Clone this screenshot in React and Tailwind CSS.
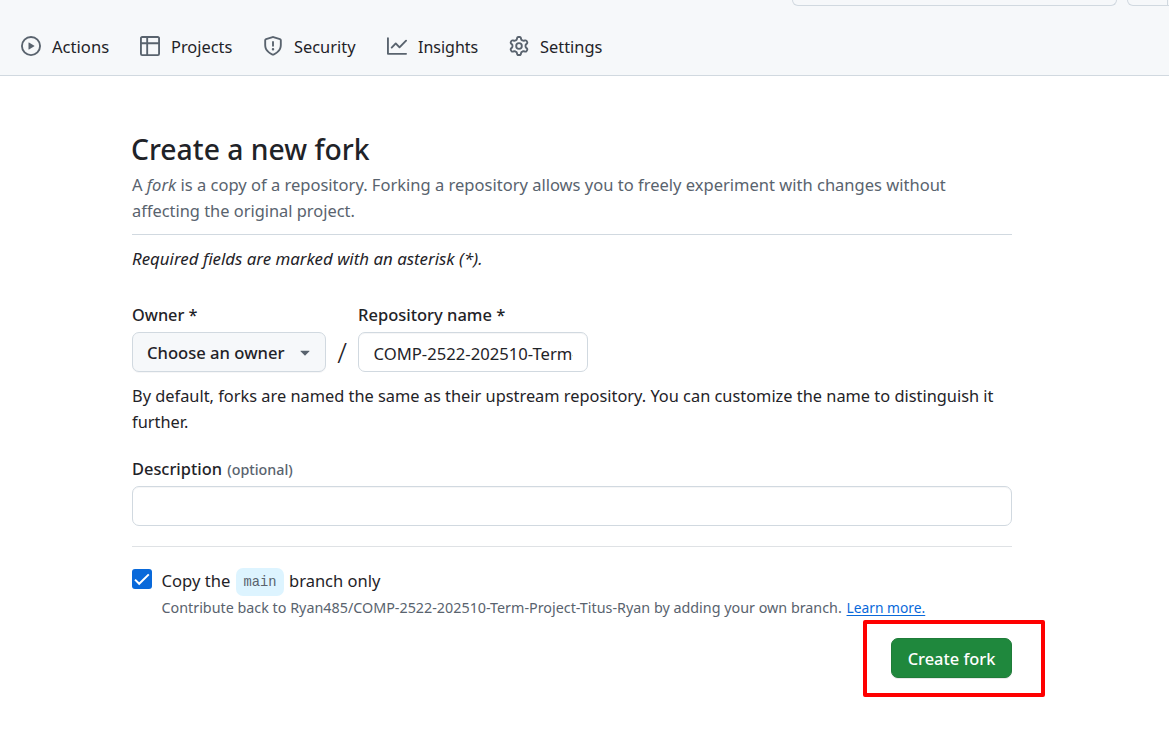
import React from "react";

const ICONS = {
  play: "M8 0a8 8 0 1 1 0 16A8 8 0 0 1 8 0ZM1.5 8a6.5 6.5 0 1 0 13 0 6.5 6.5 0 0 0-13 0Zm4.879-2.773 4.264 2.559a.25.25 0 0 1 0 .428l-4.264 2.559A.25.25 0 0 1 6 10.559V5.442a.25.25 0 0 1 .379-.215Z",
  table: "M0 1.75C0 .784.784 0 1.75 0h12.5C15.216 0 16 .784 16 1.75v12.5A1.75 1.75 0 0 1 14.25 16H1.75A1.75 1.75 0 0 1 0 14.25ZM6.5 6.5v8h7.75a.25.25 0 0 0 .25-.25V6.5Zm8-1.5V1.75a.25.25 0 0 0-.25-.25H6.5V5Zm-13 1.5v7.75c0 .138.112.25.25.25H5v-8ZM5 5V1.5H1.75a.25.25 0 0 0-.25.25V5Z",
  shield: "M7.467.133a1.748 1.748 0 0 1 1.066 0l5.25 1.68A1.75 1.75 0 0 1 15 3.48V7c0 1.566-.32 3.182-1.303 4.682-.983 1.498-2.585 2.813-5.032 3.855a1.697 1.697 0 0 1-1.33 0c-2.447-1.042-4.049-2.357-5.032-3.855C1.32 10.182 1 8.566 1 7V3.48a1.75 1.75 0 0 1 1.217-1.667Zm.61 1.429a.25.25 0 0 0-.153 0l-5.25 1.68a.25.25 0 0 0-.174.238V7c0 1.358.275 2.666 1.057 3.86.784 1.194 2.121 2.34 4.366 3.297a.196.196 0 0 0 .154 0c2.245-.956 3.582-2.104 4.366-3.298C13.225 9.666 13.5 8.36 13.5 7V3.48a.251.251 0 0 0-.174-.237l-5.25-1.68ZM8.75 4.75v3a.75.75 0 0 1-1.5 0v-3a.75.75 0 0 1 1.5 0ZM9 10.5a1 1 0 1 1-2 0 1 1 0 0 1 2 0Z",
  graph: "M1.5 1.75V13.5h13.75a.75.75 0 0 1 0 1.5H.75a.75.75 0 0 1-.75-.75V1.75a.75.75 0 0 1 1.5 0Zm14.28 2.53-5.25 5.25a.75.75 0 0 1-1.06 0L7 7.06 4.28 9.78a.751.751 0 0 1-1.042-.018.751.751 0 0 1-.018-1.042l3.25-3.25a.75.75 0 0 1 1.06 0L10 7.94l4.72-4.72a.751.751 0 0 1 1.042.018.751.751 0 0 1 .018 1.042Z",
  gear: "M8 0a8.2 8.2 0 0 1 .701.031C9.444.095 9.99.645 10.16 1.29l.288 1.107c.018.066.079.158.212.224.231.114.454.243.668.386.123.082.233.09.299.071l1.103-.303c.644-.176 1.392.021 1.82.63.27.385.506.792.704 1.218.315.675.111 1.422-.364 1.891l-.814.806c-.049.048-.098.147-.088.294.016.257.016.515 0 .772-.01.147.038.246.088.294l.814.806c.475.469.679 1.216.364 1.891a7.977 7.977 0 0 1-.704 1.217c-.428.61-1.176.807-1.82.63l-1.102-.302c-.067-.019-.177-.011-.3.071a5.909 5.909 0 0 1-.668.386c-.133.066-.194.158-.211.224l-.29 1.106c-.168.646-.715 1.196-1.458 1.26a8.006 8.006 0 0 1-1.402 0c-.743-.064-1.289-.614-1.458-1.26l-.289-1.106c-.018-.066-.079-.158-.212-.224a5.738 5.738 0 0 1-.668-.386c-.123-.082-.233-.09-.299-.071l-1.103.303c-.644.176-1.392-.021-1.82-.63a8.12 8.12 0 0 1-.704-1.218c-.315-.675-.111-1.422.363-1.891l.815-.806c.05-.048.098-.147.088-.294a6.214 6.214 0 0 1 0-.772c.01-.147-.038-.246-.088-.294l-.815-.806C.635 6.045.431 5.298.746 4.623a7.92 7.92 0 0 1 .704-1.217c.428-.61 1.176-.807 1.82-.63l1.102.302c.067.019.177.011.3-.071.214-.143.437-.272.668-.386.133-.066.194-.158.211-.224l.29-1.106C6.009.645 6.556.095 7.299.03 7.53.01 7.764 0 8 0Zm-.571 1.525c-.036.003-.108.036-.137.146l-.289 1.105c-.147.561-.549.967-.998 1.189-.173.086-.34.183-.5.29-.417.278-.97.423-1.529.27l-1.103-.303c-.109-.03-.175.016-.195.045-.22.312-.412.644-.573.99-.014.031-.021.11.059.19l.815.806c.411.406.562.957.53 1.456a4.709 4.709 0 0 0 0 .582c.032.499-.119 1.05-.53 1.456l-.815.806c-.081.08-.073.159-.059.19.162.346.353.677.573.989.02.03.085.076.195.046l1.102-.303c.56-.153 1.113-.008 1.53.27.161.107.328.204.501.29.447.222.85.629.997 1.189l.289 1.105c.029.109.101.143.137.146a6.6 6.6 0 0 0 1.142 0c.036-.003.108-.036.137-.146l.289-1.105c.147-.561.549-.967.998-1.189.173-.086.34-.183.5-.29.417-.278.97-.423 1.529-.27l1.103.303c.109.029.175-.016.195-.045.22-.313.411-.644.573-.99.014-.031.021-.11-.059-.19l-.815-.806c-.411-.406-.562-.957-.53-1.456a4.709 4.709 0 0 0 0-.582c-.032-.499.119-1.05.53-1.456l.815-.806c.081-.08.073-.159.059-.19a6.464 6.464 0 0 0-.573-.989c-.02-.03-.085-.076-.195-.046l-1.102.303c-.56.153-1.113.008-1.53-.27a4.44 4.44 0 0 0-.501-.29c-.447-.222-.85-.629-.997-1.189l-.289-1.105c-.029-.11-.101-.143-.137-.146a6.6 6.6 0 0 0-1.142 0ZM11 8a3 3 0 1 1-6 0 3 3 0 0 1 6 0ZM9.5 8a1.5 1.5 0 1 0-3.001.001A1.5 1.5 0 0 0 9.5 8Z",
  caret: "m4.427 7.427 3.396 3.396a.25.25 0 0 0 .354 0l3.396-3.396A.25.25 0 0 0 11.396 7H4.604a.25.25 0 0 0-.177.427Z",
};

function Icon({ name }) {
  return (
    <svg viewBox="0 0 16 16" className="size-5 shrink-0 fill-[#59636e]" aria-hidden="true">
      <path d={ICONS[name]} />
    </svg>
  );
}

const TABS = [
  { label: "Actions", icon: "play", style: "w-[119px] text-[16.6px]" },
  { label: "Projects", icon: "table", style: "w-[123px] text-[16.4px]" },
  { label: "Security", icon: "shield", style: "w-[124px] text-[16.4px]" },
  { label: "Insights", icon: "graph", style: "w-[122px] text-[16px]" },
  { label: "Settings", icon: "gear", style: "text-[16.4px]" },
];

function Header() {
  return (
    <header className="flex h-[76px] flex-col border-b border-[#d1d9e0] bg-[#f6f8fa]">
      <div className="flex h-1.5 shrink-0 gap-2.5 pl-[792px]">
        <div className="w-[325px] shrink-0 rounded-b-[7px] border border-t-0 border-[#d1d9e0]" />
        <div className="flex w-[60px] shrink-0 rounded-b-[7px] border border-t-0 border-[#d1d9e0]">
          <div className="w-10 border-r border-[#d1d9e0]" />
        </div>
      </div>
      <nav className="flex flex-1 items-center pt-[11px] pl-[21px]">
        {TABS.map((tab) => (
          <a key={tab.label} className={"flex items-center gap-[11px] leading-[26px] " + tab.style}>
            <Icon name={tab.icon} />
            <span className="pt-px">{tab.label}</span>
          </a>
        ))}
      </nav>
    </header>
  );
}

export default function App() {
  return (
    <div className="h-[748px] w-[1169px] overflow-hidden bg-white font-['Noto_Sans',sans-serif] text-[#1f2328]">
      <Header />
      <main className="ml-[132px] w-[880px] pt-[54px]">
        <h1 className="-ml-px text-[28.3px] leading-[38px] font-medium">Create a new fork</h1>
        <p className="mt-1 text-[16.52px] leading-[26px] whitespace-nowrap text-[#59636e]">
          A <em>fork</em> is a copy of a repository. Forking a repository allows you to freely experiment with changes without
          <br />
          <span className="text-[16.4px]">affecting the original project.</span>
        </p>
        <hr className="mt-[10px] border-[#d1d9e0]" />
        <p className="mt-[11px] text-[16.87px] leading-[26px] italic">Required fields are marked with an asterisk (*).</p>

        <div className="mt-[30px] flex items-end">
          <div className="flex w-[194px] flex-col gap-1">
            <label className="text-[16.3px] leading-[26px] font-medium">Owner *</label>
            <button className="flex h-10 items-center justify-between rounded-[7px] border border-[#d1d9e0] bg-[#f6f8fa] pr-[10px] pl-[14px] text-[16.6px] font-medium shadow-[0_1px_0_rgba(31,35,40,0.04)]">
              <span className="pt-0.5">Choose an owner</span>
              <Icon name="caret" />
            </button>
          </div>
          <span className="flex h-10 w-8 items-center justify-center text-[28px] font-light">/</span>
          <div className="flex w-[230px] flex-col gap-1">
            <label className="text-[16.5px] leading-[26px] font-medium">Repository name *</label>
            <input
              readOnly
              value="COMP-2522-202510-Term-Project-Titus-Ryan"
              className="h-10 w-full rounded-[7px] border border-[#d1d9e0] px-[14.5px] pt-0.5 text-[16.65px] shadow-[inset_0_1px_0_rgba(31,35,40,0.04)]"
            />
          </div>
        </div>

        <p className="mt-[11px] text-[16.36px] leading-[26px] whitespace-nowrap">
          By default, forks are named the same as their upstream repository. You can customize the name to distinguish it
          <br />
          further.
        </p>

        <div className="mt-[21px] flex flex-col gap-[3px]">
          <label className="text-[16.4px] leading-[26px] font-medium">
            Description <span className="ml-px text-[14.3px] text-[#59636e]">(optional)</span>
          </label>
          <div className="h-10 rounded-[7px] border border-[#d1d9e0] shadow-[inset_0_1px_0_rgba(31,35,40,0.04)]" />
        </div>
        <hr className="mt-5 border-[#dfe2e5]" />

        <div className="mt-[21px] flex gap-[9.5px]">
          <div className="mt-px flex size-5 shrink-0 items-center justify-center rounded-[3px] bg-[#0969da]">
            <svg viewBox="0 0 20 20" className="size-5" aria-hidden="true">
              <path d="M3 10.6 7.2 14.8 16.8 5.4" className="fill-none stroke-white stroke-2" />
            </svg>
          </div>
          <div>
            <div className="flex h-7 items-center text-[16.6px]">
              <span className="w-[74.5px] pb-0.5">Copy the</span>
              <span className="flex h-7 w-12 items-center justify-center rounded-[7px] bg-[#ddf4ff] pt-0.5 font-['Liberation_Mono',monospace] text-[13.75px] text-[#59636e]">
                main
              </span>
              <span className="ml-[5px] pb-0.5 text-[16.5px]">branch only</span>
            </div>
            <p className="text-[14.33px] leading-[24px] whitespace-nowrap text-[#59636e]">
              Contribute back to Ryan485/COMP-2522-202510-Term-Project-Titus-Ryan by adding your own branch.{" "}
              <a className="ml-px text-[13.8px] text-[#0969da] underline underline-offset-2">Learn more.</a>
            </p>
          </div>
        </div>

        <div className="-mr-[33px] ml-auto h-[77px] w-[182px] rounded-[2px] border-4 border-[#fe0000] pt-[14px] pl-6">
          <button className="h-10 w-[121px] rounded-[7px] border border-[#1f7c39] bg-[#1f883d] pt-0.5 text-[16.4px] font-medium text-white shadow-[0_1px_0_rgba(31,35,40,0.1)]">
            Create fork
          </button>
        </div>
      </main>
    </div>
  );
}
